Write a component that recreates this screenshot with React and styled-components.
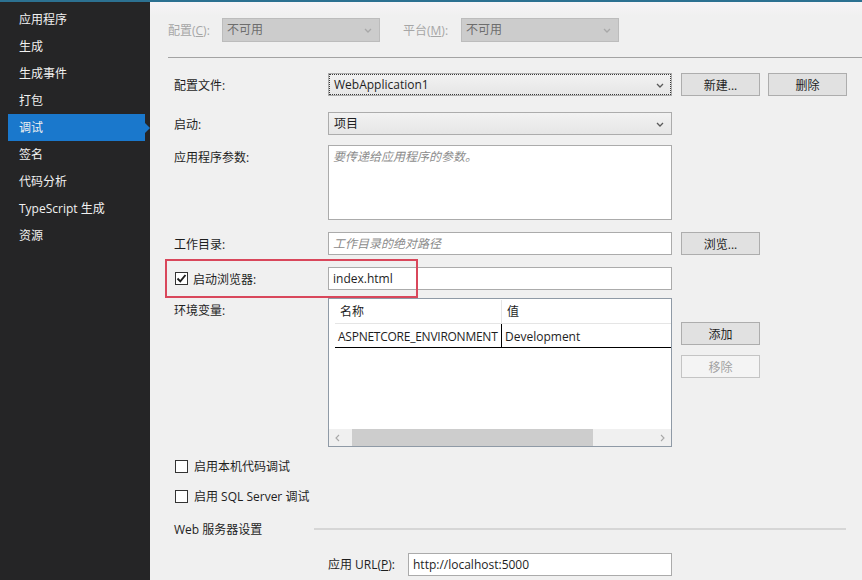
import React from 'react';
import styled, { createGlobalStyle } from 'styled-components';

const GlobalStyle = createGlobalStyle`
  html, body {
    margin: 0;
    padding: 0;
  }
  body {
    background: #f0f0f0;
    font-family: "Open Sans", "Noto Sans CJK SC", sans-serif;
    font-size: 12px;
    color: #1e1e1e;
  }
`;

const Page = styled.div`
  display: flex;
  width: 862px;
  height: 580px;
  box-sizing: border-box;
  border-top: 2px solid #2c7191;
  overflow: hidden;
`;

const Sidebar = styled.nav`
  width: 150px;
  flex-shrink: 0;
  box-sizing: border-box;
  padding: 4px 5px 0 8px;
  background: #252526;
`;

const NavItem = styled.div`
  position: relative;
  height: 27px;
  line-height: 27px;
  padding-left: 11px;
  color: #f1f1f1;
  background: ${p => (p.$active ? '#1a78cc' : 'transparent')};

  &::after {
    content: '';
    display: ${p => (p.$active ? 'block' : 'none')};
    position: absolute;
    right: -5px;
    top: 9px;
    border-top: 5px solid transparent;
    border-bottom: 5px solid transparent;
    border-left: 5px solid #1a78cc;
  }
`;

const Main = styled.main`
  flex: 1;
  padding: 16px 0 0 18px;
  background: linear-gradient(#f7f4f7 0, #f0f0f0 14px);
`;

const ConfigBar = styled.div`
  display: flex;
  align-items: center;
  height: 24px;
`;

const ConfigLabel = styled.span`
  width: ${p => p.$w}px;
  margin-left: ${p => p.$ml || 0}px;
  color: #a6a6a6;
  white-space: nowrap;
`;

const Combo = styled.div`
  position: relative;
  width: ${p => p.$w}px;
  height: ${p => p.$h}px;
  box-sizing: border-box;
  padding-left: ${p => (p.$disabled ? 4 : 5)}px;
  line-height: ${p => p.$h - 2}px;
  border: 1px solid ${p => (p.$disabled ? '#bcbcbc' : '#acacac')};
  background: ${p => (p.$disabled ? '#cccccc' : 'linear-gradient(#f2f2f2, #e6e6e6)')};
  color: ${p => (p.$disabled ? '#6d6d6d' : '#1e1e1e')};
  outline: ${p => (p.$focus ? '1px dotted #3a3a3a' : 'none')};
  outline-offset: -2px;

  svg {
    position: absolute;
    right: 7px;
    top: 50%;
    margin-top: -2px;
  }
`;

const Divider = styled.div`
  height: 1px;
  margin-top: 15px;
  background: #a3a3a3;
`;

const Form = styled.div`
  padding-left: 6px;
`;

const Row = styled.div`
  position: relative;
  display: flex;
  align-items: flex-start;
  margin-top: ${p => p.$mt}px;
`;

const Label = styled.div`
  display: flex;
  align-items: center;
  width: 154px;
  height: 23px;
  flex-shrink: 0;
  white-space: nowrap;
`;

const Field = styled.div`
  width: ${p => p.$w || 344}px;
  height: ${p => p.$h || 23}px;
  box-sizing: border-box;
  padding: ${p => (p.$multi ? '2px 4px' : '0 4px')};
  line-height: ${p => (p.$multi ? '18px' : '21px')};
  border: 1px solid #ababab;
  background: #fff;
  color: ${p => (p.$placeholder ? '#8c8c8c' : '#1e1e1e')};
  font-style: ${p => (p.$placeholder ? 'italic' : 'normal')};
  white-space: nowrap;
`;

const ButtonGroup = styled.div`
  display: flex;
  flex-direction: ${p => (p.$column ? 'column' : 'row')};
  gap: ${p => (p.$column ? 10 : 8)}px;
  margin-left: 9px;
  padding-top: ${p => p.$pt || 0}px;
`;

const Button = styled.button`
  width: 79px;
  height: 23px;
  padding: 0;
  box-sizing: border-box;
  font-family: inherit;
  font-size: 12px;
  border: 1px solid ${p => (p.disabled ? '#c4c4c4' : '#adadad')};
  background: ${p => (p.disabled ? '#f4f4f4' : '#e1e1e1')};
  color: ${p => (p.disabled ? '#a2a2a2' : '#1e1e1e')};
`;

const Highlight = styled.div`
  position: absolute;
  left: -9px;
  top: -8px;
  width: 253px;
  height: 39px;
  box-sizing: border-box;
  border: 2px solid #d9475b;
  pointer-events: none;
`;

const Box = styled.span`
  display: inline-flex;
  align-items: center;
  justify-content: center;
  width: 13px;
  height: 13px;
  box-sizing: border-box;
  margin-left: 1px;
  border: 1px solid #333;
  background: #fff;
`;

const BoxText = styled.span`
  margin-left: ${p => p.$ml || 5}px;
`;

const EnvTable = styled.div`
  display: flex;
  flex-direction: column;
  width: 344px;
  height: 149px;
  box-sizing: border-box;
  border: 1px solid #8f9aa6;
  background: #fff;
`;

const Grid = styled.div`
  flex: 1;
  display: grid;
  grid-template-columns: 167px 1fr;
  grid-auto-rows: 24px;
  align-content: start;
  padding: 1px 0 0 6px;
`;

const HeadCell = styled.div`
  padding-left: 5px;
  line-height: 24px;
  border-bottom: 1px solid #e5e5e5;
  border-right: ${p => (p.$first ? '1px solid #e5e5e5' : 'none')};
`;

const Cell = styled.div`
  padding-left: 3px;
  line-height: 25px;
  white-space: nowrap;
  overflow: hidden;
  letter-spacing: ${p => (p.$first ? '-0.25px' : '0')};
  border-bottom: 1px solid #000;
  border-right: ${p => (p.$first ? '1px solid #000' : 'none')};
`;

const ScrollBar = styled.div`
  display: flex;
  height: 17px;
  background: #f0f0f0;
`;

const ScrollArrow = styled.div`
  display: flex;
  align-items: center;
  justify-content: center;
  width: 17px;
`;

const Track = styled.div`
  flex: 1;
  padding-left: 6px;
`;

const Thumb = styled.div`
  width: 241px;
  height: 100%;
  background: #cdcdcd;
`;

const CheckRow = styled.div`
  display: flex;
  align-items: center;
  height: 20px;
  margin-top: ${p => p.$mt}px;
`;

const Section = styled.div`
  display: flex;
  align-items: center;
  height: 20px;
  margin-top: 13px;
`;

const SectionTitle = styled.span`
  width: 140px;
  flex-shrink: 0;
`;

const SectionLine = styled.div`
  flex: 1;
  height: 2px;
  margin-right: 16px;
  background: #d6d6d6;
`;

const UrlLabel = styled.div`
  width: 80px;
  line-height: 23px;
  margin-left: 154px;
  white-space: nowrap;
`;

const Chevron = ({ color = '#5a5a5a' }) => (
  <svg width="8" height="5" viewBox="0 0 8 5">
    <path d="M1 1 L4 4 L7 1" fill="none" stroke={color} strokeWidth="1.3" />
  </svg>
);

const Arrow = ({ dir }) => (
  <svg width="5" height="8" viewBox="0 0 5 8">
    <path d={dir === 'left' ? 'M4 1 L1 4 L4 7' : 'M1 1 L4 4 L1 7'} fill="none" stroke="#a8a8a8" strokeWidth="1.1" />
  </svg>
);

const Check = () => (
  <svg width="11" height="11" viewBox="0 0 11 11">
    <path d="M1.5 5.5 L4.3 8.3 L9.5 2" fill="none" stroke="#1e1e1e" strokeWidth="1.9" />
  </svg>
);

const navItems = ['应用程序', '生成', '生成事件', '打包', '调试', '签名', '代码分析', 'TypeScript 生成', '资源'];

const App = () => {
  return (
    <>
      <GlobalStyle />
      <Page>
        <Sidebar>
          {navItems.map(item => (
            <NavItem key={item} $active={item === '调试'}>{item}</NavItem>
          ))}
        </Sidebar>
        <Main>
          <ConfigBar>
            <ConfigLabel $w={54}>配置(<u>C</u>):</ConfigLabel>
            <Combo $w={158} $h={24} $disabled>不可用<Chevron color="#a8a8a8" /></Combo>
            <ConfigLabel $w={58} $ml={23}>平台(<u>M</u>):</ConfigLabel>
            <Combo $w={158} $h={24} $disabled>不可用<Chevron color="#a8a8a8" /></Combo>
          </ConfigBar>
          <Divider />
          <Form>
            <Row $mt={15}>
              <Label>配置文件:</Label>
              <Combo $w={344} $h={23} $focus>WebApplication1<Chevron /></Combo>
              <ButtonGroup>
                <Button>新建...</Button>
                <Button>删除</Button>
              </ButtonGroup>
            </Row>
            <Row $mt={16}>
              <Label>启动:</Label>
              <Combo $w={344} $h={23}>项目<Chevron /></Combo>
            </Row>
            <Row $mt={10}>
              <Label>应用程序参数:</Label>
              <Field $h={75} $multi $placeholder>要传递给应用程序的参数。</Field>
            </Row>
            <Row $mt={12}>
              <Label>工作目录:</Label>
              <Field $placeholder>工作目录的绝对路径</Field>
              <ButtonGroup>
                <Button>浏览...</Button>
              </ButtonGroup>
            </Row>
            <Row $mt={12}>
              <Label>
                <Box><Check /></Box>
                <BoxText>启动浏览器:</BoxText>
              </Label>
              <Field>index.html</Field>
              <Highlight />
            </Row>
            <Row $mt={8}>
              <Label>环境变量:</Label>
              <EnvTable>
                <Grid>
                  <HeadCell $first>名称</HeadCell>
                  <HeadCell>值</HeadCell>
                  <Cell $first>ASPNETCORE_ENVIRONMENT</Cell>
                  <Cell>Development</Cell>
                </Grid>
                <ScrollBar>
                  <ScrollArrow><Arrow dir="left" /></ScrollArrow>
                  <Track><Thumb /></Track>
                  <ScrollArrow><Arrow dir="right" /></ScrollArrow>
                </ScrollBar>
              </EnvTable>
              <ButtonGroup $column $pt={24}>
                <Button>添加</Button>
                <Button disabled>移除</Button>
              </ButtonGroup>
            </Row>
            <CheckRow $mt={9}>
              <Box />
              <BoxText $ml={6}>启用本机代码调试</BoxText>
            </CheckRow>
            <CheckRow $mt={10}>
              <Box />
              <BoxText $ml={6}>启用 SQL Server 调试</BoxText>
            </CheckRow>
            <Section>
              <SectionTitle>Web 服务器设置</SectionTitle>
              <SectionLine />
            </Section>
            <Row $mt={14}>
              <UrlLabel>应用 URL(<u>P</u>):</UrlLabel>
              <Field $w={264}>http://localhost:5000</Field>
            </Row>
          </Form>
        </Main>
      </Page>
    </>
  );
};

export default App;
